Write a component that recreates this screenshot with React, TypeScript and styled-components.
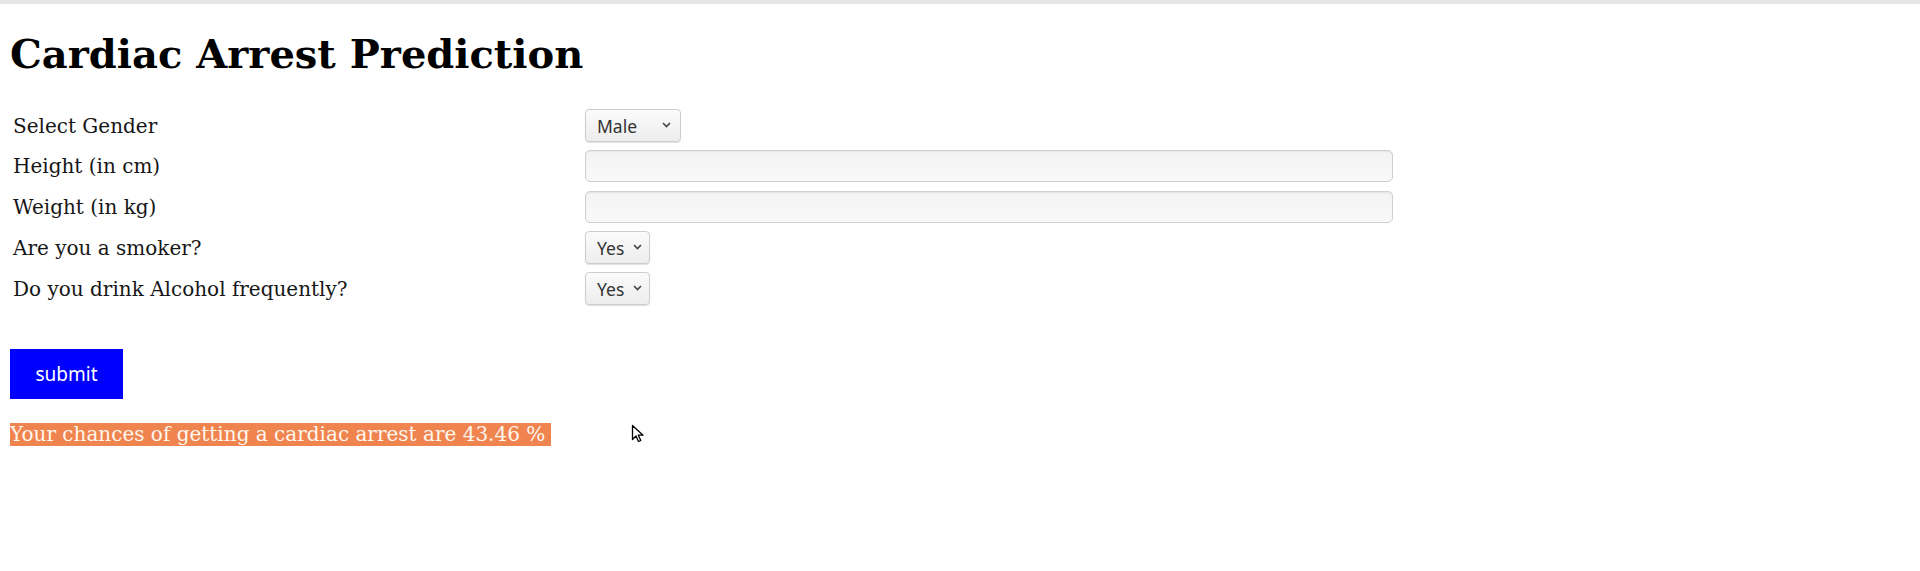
import React from "react";
import styled, { createGlobalStyle } from "styled-components";

const GlobalStyle = createGlobalStyle`
  html, body {
    margin: 0;
    padding: 0;
    background: #ffffff;
  }
  body {
    font-family: "DejaVu Serif", serif;
    color: #111111;
  }
`;

const TopBar = styled.div`
  height: 4px;
  background-color: #e6e6e6;
`;

const Page = styled.main`
  position: relative;
  padding: 1px 10px 0;
`;

const Title = styled.h1`
  margin: 26px 0 0;
  font-family: "DejaVu Serif", serif;
  font-weight: 700;
  font-size: 40px;
  line-height: 46px;
  color: #000000;
`;

const FormGrid = styled.div`
  display: grid;
  grid-template-columns: 575px 1fr;
  grid-auto-rows: 33px;
  row-gap: 7.8px;
  align-items: center;
  margin-top: 32px;
`;

const Label = styled.label`
  padding-left: 3px;
  font-family: "DejaVu Serif", serif;
  font-size: 20px;
  color: #161616;
`;

const SelectWrap = styled.div`
  position: relative;
  display: inline-flex;
  align-items: center;
`;

const Select = styled.select<{ $width: number }>`
  appearance: none;
  width: ${(props) => props.$width}px;
  height: 33px;
  padding: 0 0 0 11px;
  border: 1px solid #cdcdcd;
  border-radius: 4px;
  background: linear-gradient(#fbfbfb, #ededed);
  box-shadow: 0 1px 1px rgba(0, 0, 0, 0.12);
  font-family: "Noto Sans", "Open Sans", sans-serif;
  font-size: 17.5px;
  color: #333333;
  outline: none;
`;

const Chevron = styled.svg<{ $right: number }>`
  position: absolute;
  right: ${(props) => props.$right}px;
  top: 50%;
  width: 9px;
  height: 6px;
  margin-top: -4px;
  pointer-events: none;
`;

const TextInput = styled.input`
  box-sizing: border-box;
  width: 808px;
  height: 32px;
  border: 1px solid #cfcfcf;
  border-radius: 5px;
  background: linear-gradient(#f3f3f3, #f9f9f9);
  box-shadow: inset 0 1px 1px rgba(0, 0, 0, 0.06);
  outline: none;
`;

const SubmitButton = styled.button`
  display: block;
  width: 113px;
  height: 50px;
  margin-top: 44px;
  border: none;
  background-color: #0000ff;
  color: #ffffff;
  font-family: "Noto Sans", "Open Sans", sans-serif;
  font-size: 19px;
`;

const ResultLine = styled.div`
  margin-top: 24px;
`;

const ResultText = styled.span`
  display: inline-block;
  height: 23px;
  padding-right: 6px;
  line-height: 23px;
  background-color: #f0844f;
  color: #fff6ee;
  font-family: "DejaVu Serif", serif;
  font-size: 20px;
`;

const Cursor = styled.svg`
  position: absolute;
  z-index: 10;
  left: 631px;
  top: 420px;
  width: 13px;
  height: 19px;
`;

const DropdownSelect = ({ options, width, chevronRight }: { options: string[]; width: number; chevronRight: number }) => (
  <SelectWrap>
    <Select $width={width} defaultValue={options[0]}>
      {options.map((o) => (
        <option key={o}>{o}</option>
      ))}
    </Select>
    <Chevron $right={chevronRight} viewBox="0 0 9 6">
      <path d="M1 1 L4.5 4.5 L8 1" fill="none" stroke="#444" strokeWidth="1.6" />
    </Chevron>
  </SelectWrap>
);

const App = () => {
  return (
    <>
      <GlobalStyle />
      <TopBar />
      <Page>
        <Title>Cardiac Arrest Prediction</Title>
        <FormGrid>
          <Label>Select Gender</Label>
          <div>
            <DropdownSelect options={["Male", "Female"]} width={96} chevronRight={10} />
          </div>
          <Label>Height (in cm)</Label>
          <div>
            <TextInput type="text" />
          </div>
          <Label>Weight (in kg)</Label>
          <div>
            <TextInput type="text" />
          </div>
          <Label>Are you a smoker?</Label>
          <div>
            <DropdownSelect options={["Yes", "No"]} width={65} chevronRight={8} />
          </div>
          <Label>Do you drink Alcohol frequently?</Label>
          <div>
            <DropdownSelect options={["Yes", "No"]} width={65} chevronRight={8} />
          </div>
        </FormGrid>
        <SubmitButton>submit</SubmitButton>
        <ResultLine>
          <ResultText>Your chances of getting a cardiac arrest are 43.46 %</ResultText>
        </ResultLine>
        <Cursor viewBox="0 0 13 19">
          <path d="M1.5 1.5 L1.5 15.5 L5 12 L7.5 17.5 L9.8 16.5 L7.3 11.2 L12 11.2 Z" fill="#ffffff" stroke="#000000" strokeWidth="1.3" strokeLinejoin="round" />
        </Cursor>
      </Page>
    </>
  );
};

export default App;
